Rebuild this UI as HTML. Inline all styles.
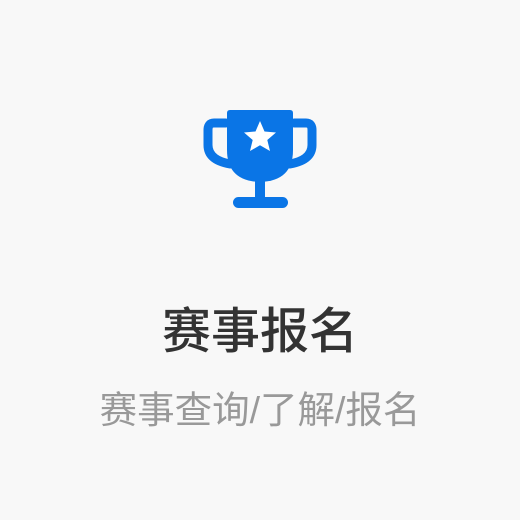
<!DOCTYPE html>
<html><head><meta charset="utf-8"><style>
html,body{margin:0;padding:0;background:#f8f8f8;}
body{width:520px;height:520px;position:relative;overflow:hidden;font-family:"Liberation Sans","Noto Sans CJK SC",sans-serif;}
svg{position:absolute;left:0;top:0;}
.t{position:absolute;left:0;width:520px;text-align:center;top:302px;font-size:49px;line-height:60px;color:#333;font-weight:500;}
.s{position:absolute;left:0;width:520px;text-align:center;top:385px;font-size:37.5px;line-height:50px;color:#999;}
</style></head><body>
<svg width="520" height="520" viewBox="0 0 520 520">
<path d="M214 123 H226 M294 123 H306 M214 123 Q208 123 208 130 V145 Q208 160 230 164 M306 123 Q312 123 312 130 V145 Q312 160 290 164" fill="none" stroke="#0a75e6" stroke-width="9" stroke-linecap="round"/>
<path d="M230 110 H290 Q293 110 293 113 V150 Q293 181 260 182 Q227 181 227 150 V113 Q227 110 230 110 Z" fill="#0a75e6"/>
<rect x="255" y="178" width="10" height="22" fill="#0a75e6"/>
<rect x="233" y="197" width="55" height="11" rx="5.5" fill="#0a75e6"/>
<polygon points="260,121 264.5,131.5 276,132.5 267.3,140 270,151 260,145.3 250,151 252.7,140 244,132.5 255.5,131.5" fill="#fff"/>
</svg>
<div class="t">赛事报名</div>
<div class="s">赛事查询/了解/报名</div>
</body></html>
